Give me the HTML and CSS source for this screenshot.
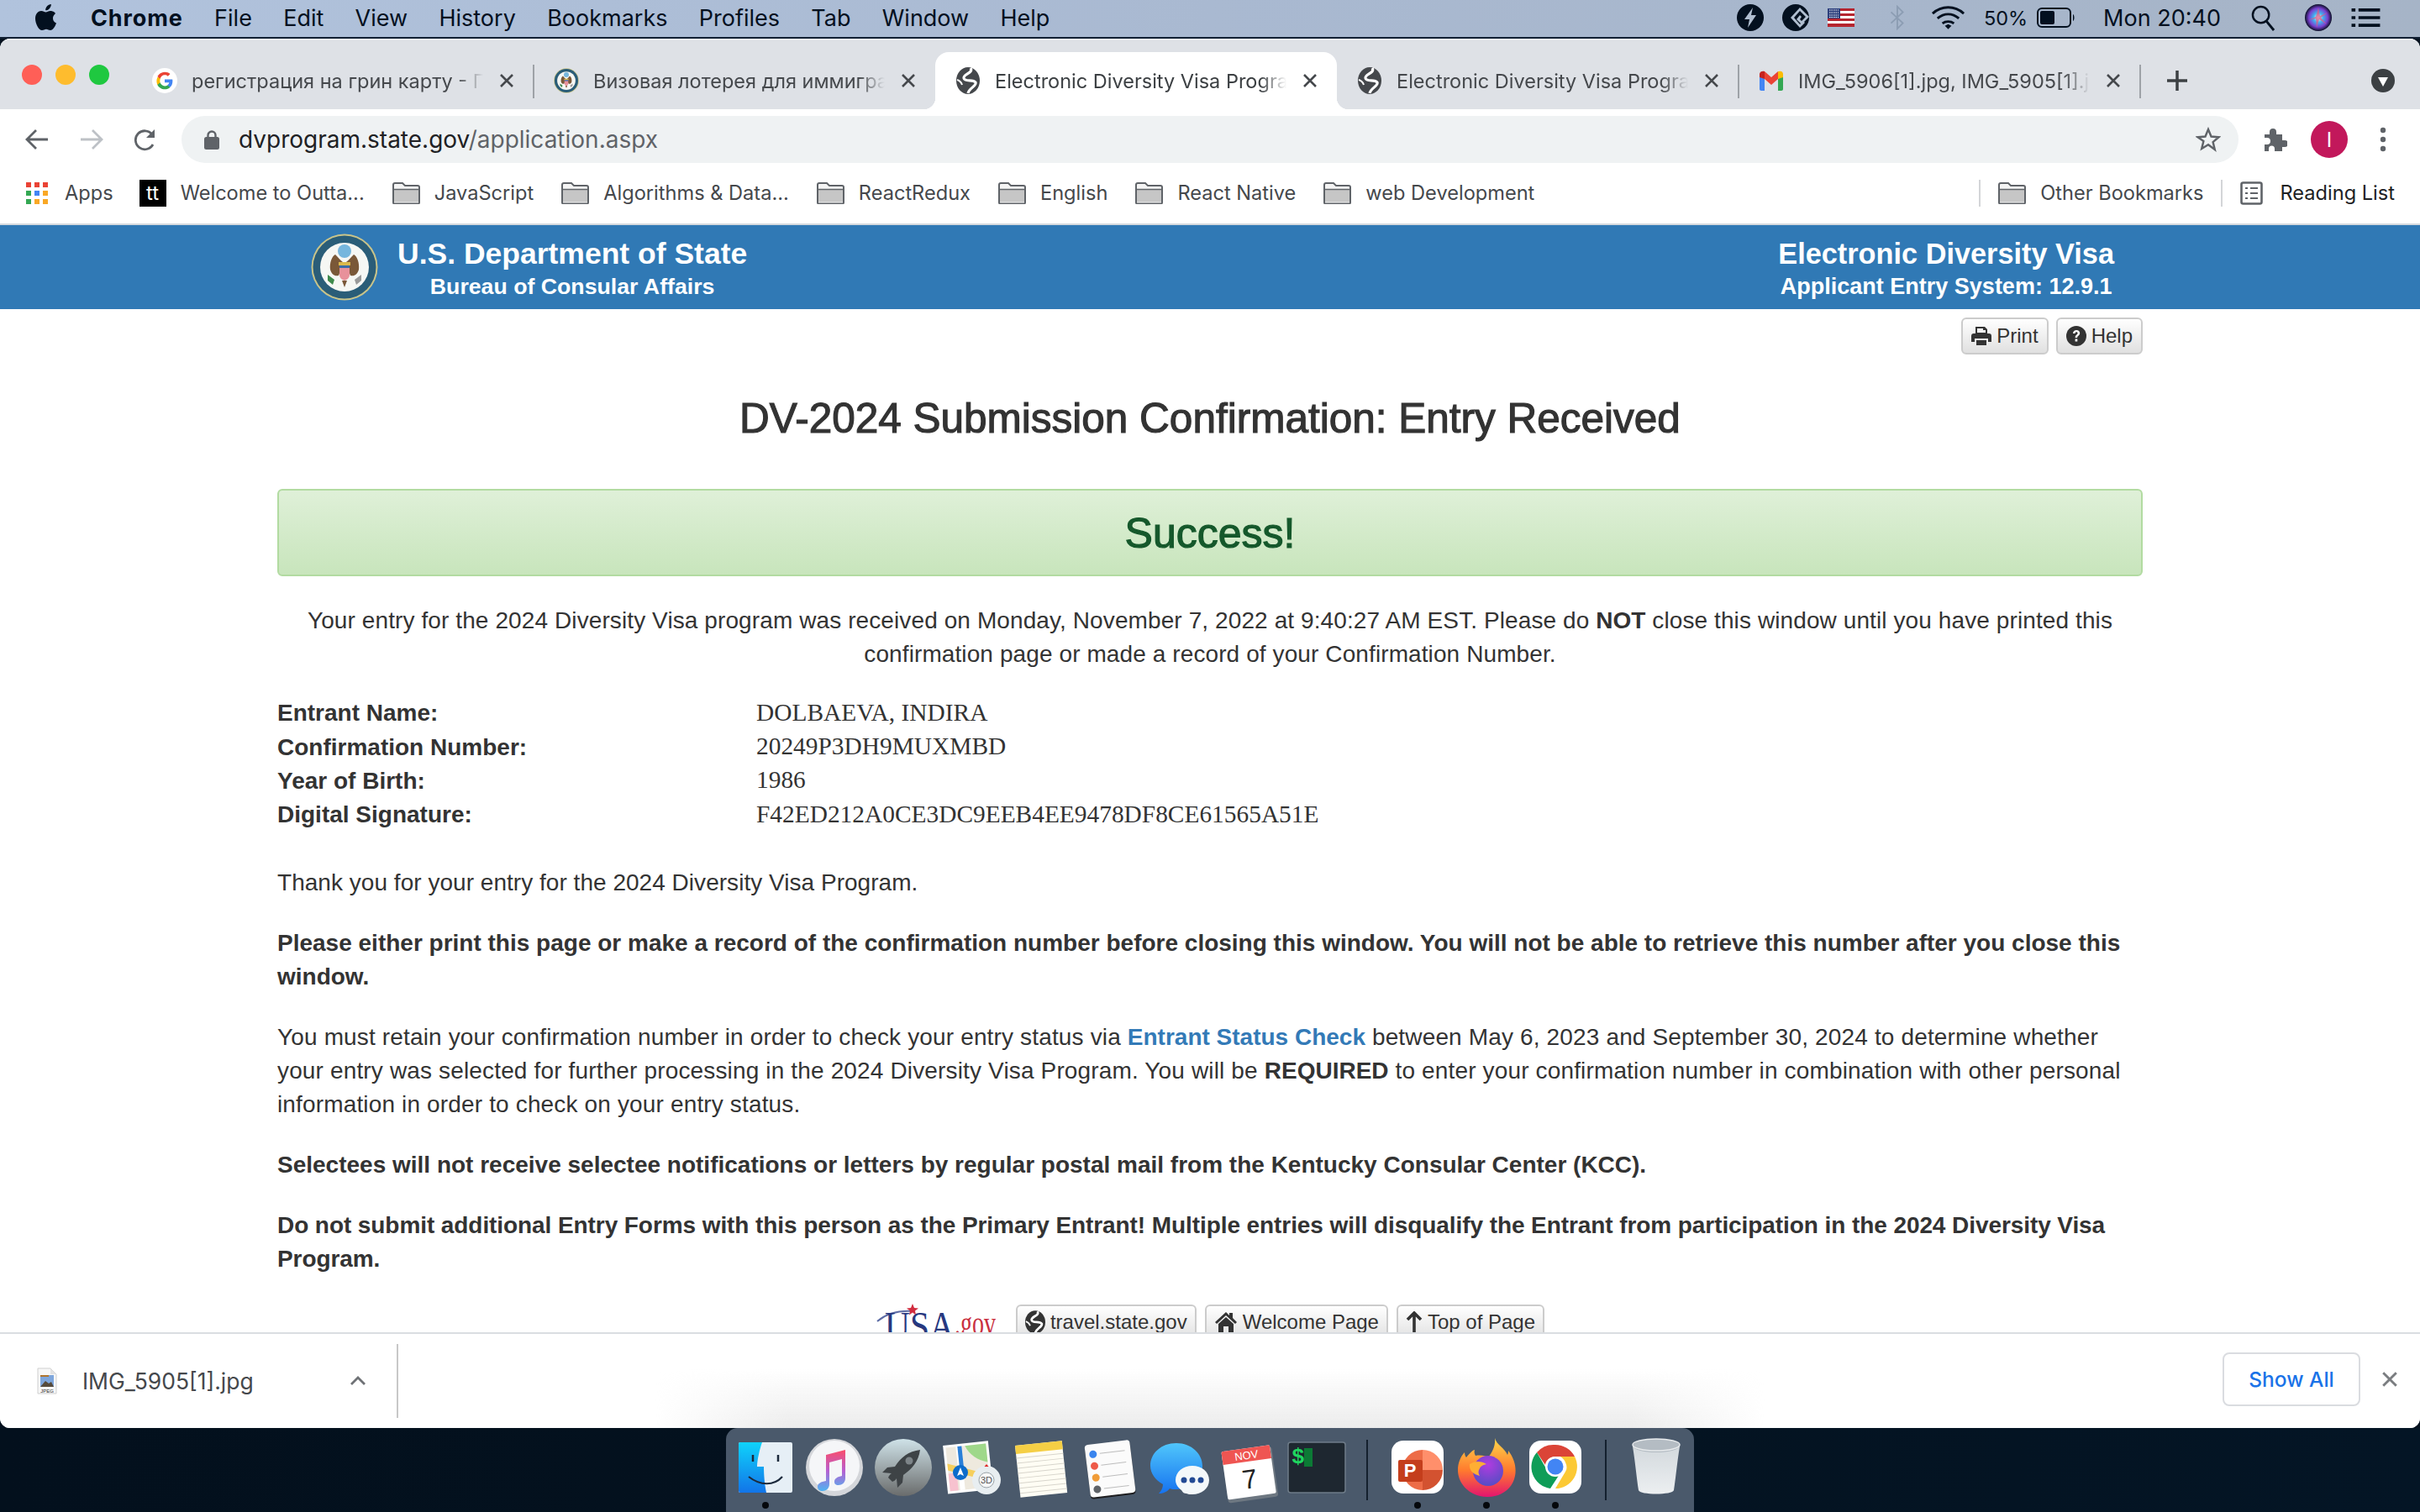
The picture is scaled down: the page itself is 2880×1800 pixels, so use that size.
FILE: index.html
```html
<!DOCTYPE html>
<html lang="en">
<head>
<meta charset="utf-8">
<title>Electronic Diversity Visa Program</title>
<link rel="stylesheet" href="styles.css">
</head>
<body>
<svg class="sprite" aria-hidden="true">
  <defs>
    <symbol id="folder" viewBox="0 0 33 26">
      <path d="M1 24V3a2 2 0 0 1 2-2h9l3 3h15a2 2 0 0 1 2 2v18a1.500 1.500 0 0 1-1.500 1.500H2.500A1.500 1.500 0 0 1 1 24z" fill="#f4f4f4" stroke="#5f6368" stroke-width="2"/>
      <path d="M2 9h29v14.500H2z" fill="#c6c6c6"/>
      <path d="M1 8.500h31" stroke="#5f6368" stroke-width="1.500"/>
    </symbol>
    <symbol id="globe" viewBox="0 0 28 32">
      <ellipse cx="14" cy="16" rx="14" ry="16" fill="currentColor"/>
      <path d="M17 1C21 7 8 8 9 13c1 5 11 1 14 5 2 4-8 7-9 13" fill="none" stroke="#fff" stroke-width="3.200"/>
      <path d="M1 15c3 1 5 3 6 6" fill="none" stroke="#fff" stroke-width="2"/>
    </symbol>
    <symbol id="close" viewBox="0 0 18 18">
      <path d="M2 2l14 14M16 2L2 16" stroke="currentColor" stroke-width="2.600" fill="none"/>
    </symbol>
    <symbol id="seal" viewBox="0 0 80 80">
      <circle cx="40" cy="40" r="39.500" fill="#c9c48a"/>
      <circle cx="40" cy="40" r="37.500" fill="#2a5d78"/>
      <circle cx="40" cy="40" r="29" fill="#f6f7f4"/>
      <circle cx="40" cy="21" r="8" fill="#76b6dd"/>
      <path d="M38 34c-3-2-5-5-9-9-4 2-7 10-6 18 2 6 5 8 10 7l3-8zM42 34c3-2 5-5 9-9 4 2 7 10 6 18-2 6-5 8-10 7l-3-8z" fill="#7a5838"/>
      <path d="M33 34h14v4H33z" fill="#d9b84c"/>
      <path d="M34 38h12v11c0 4-3 6-6 7-3-1-6-3-6-7z" fill="#e8919b"/>
      <path d="M34 38h12v3H34z" fill="#3a6ca8"/>
      <path d="M20 49l8 6-2 6-6-5z" fill="#3f8a4c"/>
      <path d="M60 49l-8 6 2 6 6-5z" fill="#9a9a9a"/>
      <path d="M37 56h6l-3 8z" fill="#7a5838"/>
    </symbol>
  </defs>
</svg>

<header class="menubar">
  <svg class="apple" viewBox="0 0 26 32"><path d="M21 17c0-4 3-5.500 3-6-2-3-5-3-6-3-2.500 0-4 1.500-5.500 1.500S9.500 8 7 8C4 8 0 11 0 17c0 6 4 14 8 14 2 0 3-1.300 5-1.300S16 31 18 31c3 0 6-5 7-8.500-2-1-4-2.500-4-5.500zM17 5c1.300-1.500 2-3.200 1.800-5-1.800.2-3.700 1.200-4.900 2.500-1 1.200-2 3-1.700 4.800 1.900.1 3.700-.9 4.800-2.300z" fill="#03101f"/></svg>
  <nav class="menu-items">
    <span class="menu-app">Chrome</span><span>File</span><span>Edit</span><span>View</span><span>History</span><span>Bookmarks</span><span>Profiles</span><span>Tab</span><span>Window</span><span>Help</span>
  </nav>
  <div class="status">
    <svg class="st-round" viewBox="0 0 32 32"><circle cx="16" cy="16" r="16" fill="#03101f"/><path d="M19 4L9 18h6l-2 10 10-15h-6z" fill="#b0bed0"/></svg>
    <svg class="st-round" viewBox="0 0 32 32"><circle cx="16" cy="16" r="16" fill="#03101f"/><path d="M21 4L10 16l11 12 6-6-2-2-4 4-7-8 7-8 7 7-5 5-2-2 2-3-2-2-4 5 6 6 9-9z" fill="#b0bed0"/></svg>
    <svg class="st-flag" viewBox="0 0 32 22"><rect width="32" height="22" fill="#fff"/><path d="M0 0h32v3H0zM0 6h32v3H0zM0 12h32v3H0zM0 18h32v4H0z" fill="#b5252f"/><rect width="15" height="12" fill="#2c3f7c"/><path d="M2 2h11M2 5h11M2 8h11M2 10.500h11" stroke="#fff" stroke-width="1" stroke-dasharray="1.500 1"/></svg>
    <svg class="st-bt" viewBox="0 0 22 32"><path d="M3 9l15 14-7 7V2l7 7L3 23" fill="none" stroke="#8c9db3" stroke-width="2"/></svg>
    <svg class="st-wifi" viewBox="0 0 42 30"><path d="M2 10c11-10 27-10 38 0M8 16c8-7 18-7 26 0M14 22c4-3 10-3 14 0" fill="none" stroke="#03101f" stroke-width="3"/><path d="M17 25l4-2 4 2-4 4z" fill="#03101f"/></svg>
    <span class="st-pct">50%</span>
    <svg class="st-batt" viewBox="0 0 46 24"><rect x="1" y="1" width="39" height="22" rx="5" fill="none" stroke="#03101f" stroke-width="2"/><rect x="4" y="4" width="17" height="16" rx="2" fill="#03101f"/><path d="M43 8c2 1 2 7 0 8z" fill="#03101f"/></svg>
    <span class="st-clock">Mon 20:40</span>
    <svg class="st-search" viewBox="0 0 30 32"><circle cx="12" cy="12" r="10" fill="none" stroke="#03101f" stroke-width="2.500"/><path d="M19 20l9 11" stroke="#03101f" stroke-width="3"/></svg>
    <svg class="st-siri" viewBox="0 0 32 32"><defs><radialGradient id="siri" cx="50%" cy="50%" r="50%"><stop offset="0" stop-color="#fff"/><stop offset=".35" stop-color="#3fb4ef"/><stop offset=".7" stop-color="#7a3fd1"/><stop offset="1" stop-color="#0a1026"/></radialGradient></defs><circle cx="16" cy="16" r="16" fill="url(#siri)"/><path d="M16 4l2 10 9-4-8 6 7 8-9-6-3 10-1-11-9 2 9-4z" fill="#e7557f" opacity=".7"/></svg>
    <svg class="st-list" viewBox="0 0 37 24"><path d="M0 2h5M9 2h28M0 12h5M9 12h28M0 22h5M9 22h28" stroke="#03101f" stroke-width="4"/></svg>
  </div>
</header>

<div class="window">
  <div class="tabstrip">
    <div class="lights"><i class="light red"></i><i class="light yellow"></i><i class="light green"></i></div>
    <div class="tab divided">
      <svg class="fav" viewBox="0 0 32 32"><circle cx="16" cy="16" r="16" fill="#fff"/><path d="M26 16.500c0-.8-.1-1.500-.2-2H16v4h5.700c-.3 1.300-1 2.400-2.100 3.100v2.700h3.300c2-1.800 3.100-4.500 3.100-7.800z" fill="#4285f4"/><path d="M16 27c2.800 0 5.100-.9 6.900-2.500l-3.300-2.700c-.9.600-2.200 1-3.600 1-2.700 0-5-1.900-5.800-4.300H6.800v2.800C8.500 24.700 12 27 16 27z" fill="#34a853"/><path d="M10.200 18.500c-.4-1.300-.4-2.700 0-4v-2.800H6.800c-1.400 2.800-1.400 6.800 0 9.600z" fill="#fbbc05"/><path d="M16 8.900c1.500 0 2.900.5 4 1.500l3-3C21.100 5.700 18.700 5 16 5c-4 0-7.500 2.300-9.200 5.700l3.400 2.800c.8-2.500 3.100-4.600 5.800-4.600z" fill="#ea4335"/></svg>
      <span class="tab-title">регистрация на грин карту - Поиск в Google</span>
      <svg class="tab-x"><use href="#close"/></svg>
    </div>
    <div class="tab">
      <svg class="fav"><use href="#seal"/></svg>
      <span class="tab-title">Визовая лотерея для иммиграции</span>
      <svg class="tab-x"><use href="#close"/></svg>
    </div>
    <div class="tab active">
      <svg class="fav fav-globe"><use href="#globe"/></svg>
      <span class="tab-title">Electronic Diversity Visa Program</span>
      <svg class="tab-x"><use href="#close"/></svg>
    </div>
    <div class="tab divided">
      <svg class="fav fav-globe"><use href="#globe"/></svg>
      <span class="tab-title">Electronic Diversity Visa Program</span>
      <svg class="tab-x"><use href="#close"/></svg>
    </div>
    <div class="tab divided">
      <svg class="fav" viewBox="0 0 30 32"><path d="M1 8v18c0 1 .8 2 2 2h4V14z" fill="#4285f4"/><path d="M29 8v18c0 1-.8 2-2 2h-4V14z" fill="#34a853"/><path d="M23 5v9l6-2V8c0-3-3-4-5-3z" fill="#fbbc04"/><path d="M7 14V5L15 12l8-7v9l-8 7z" fill="#ea4335"/><path d="M1 8v4l6 2V5C5 4 1 5 1 8z" fill="#c5221f"/></svg>
      <span class="tab-title">IMG_5906[1].jpg, IMG_5905[1].jpg</span>
      <svg class="tab-x"><use href="#close"/></svg>
    </div>
    <svg class="newtab" viewBox="0 0 24 24"><path d="M12 0v24M0 12h24" stroke="#3c4043" stroke-width="3.500"/></svg>
    <svg class="tabmenu" viewBox="0 0 28 28"><circle cx="14" cy="14" r="14" fill="#3c4043"/><path d="M8 10h12l-6 11z" fill="#fff"/></svg>
  </div>

  <div class="toolbar">
    <svg class="tool-icon" viewBox="0 0 28 28"><path d="M27 14H3M13 3L2 14l11 11" fill="none" stroke="#5f6368" stroke-width="2.800"/></svg>
    <svg class="tool-icon forward" viewBox="0 0 28 28"><path d="M1 14h24M15 3l11 11-11 11" fill="none" stroke="#bdc1c6" stroke-width="2.800"/></svg>
    <svg class="tool-icon reload" viewBox="0 0 28 28"><path d="M23 20a11 11 0 1 1-1-12" fill="none" stroke="#5f6368" stroke-width="2.800"/><path d="M25 2v10H15z" fill="#5f6368"/></svg>
    <div class="omnibox">
      <svg class="lock" viewBox="0 0 18 24"><path d="M4.500 11V7a4.500 4.500 0 0 1 9 0v4" fill="none" stroke="#5f6368" stroke-width="2.400"/><rect y="9" width="18" height="15" rx="2.500" fill="#5f6368"/></svg>
      <span class="url"><span class="url-host">dvprogram.state.gov</span>/application.aspx</span>
      <svg class="star" viewBox="0 0 30 30"><path d="M15 3l3.500 8.500 9 .7-6.900 5.900 2.200 8.900L15 21.300 7.200 26l2.200-8.900L2.500 12.200l9-.7z" fill="none" stroke="#5f6368" stroke-width="2.400"/></svg>
    </div>
    <svg class="puzzle" viewBox="0 0 30 30"><path d="M3 9h6V6a4 4 0 0 1 8 0v3h7v7h3a4 4 0 0 1 0 8h-3v5H15v-3a3.500 3.500 0 0 0-7 0v3H3v-8h3a4 4 0 0 0 0-8H3z" fill="#5f6368"/></svg>
    <div class="avatar">I</div>
    <svg class="dots" viewBox="0 0 8 30"><circle cx="4" cy="4" r="3.200" fill="#5f6368"/><circle cx="4" cy="15" r="3.200" fill="#5f6368"/><circle cx="4" cy="26" r="3.200" fill="#5f6368"/></svg>
  </div>

  <div class="bookmarks">
    <div class="bm bm-apps">
      <svg class="bm-grid" viewBox="0 0 26 26"><path d="M0 0h6v6H0z" fill="#ea4335"/><path d="M10 0h6v6h-6z" fill="#ea4335"/><path d="M20 0h6v6h-6z" fill="#ea4335"/><path d="M0 10h6v6H0z" fill="#34a853"/><path d="M10 10h6v6h-6z" fill="#4285f4"/><path d="M20 10h6v6h-6z" fill="#f9a825"/><path d="M0 20h6v6H0z" fill="#34a853"/><path d="M10 20h6v6h-6z" fill="#f9a825"/><path d="M20 20h6v6h-6z" fill="#f9a825"/></svg>
      <span>Apps</span>
    </div>
    <div class="bm"><span class="tt">tt</span><span>Welcome to Outta...</span></div>
    <div class="bm"><svg class="folder"><use href="#folder"/></svg><span>JavaScript</span></div>
    <div class="bm"><svg class="folder"><use href="#folder"/></svg><span>Algorithms &amp; Data...</span></div>
    <div class="bm"><svg class="folder"><use href="#folder"/></svg><span>ReactRedux</span></div>
    <div class="bm"><svg class="folder"><use href="#folder"/></svg><span>English</span></div>
    <div class="bm"><svg class="folder"><use href="#folder"/></svg><span>React Native</span></div>
    <div class="bm"><svg class="folder"><use href="#folder"/></svg><span>web Development</span></div>
    <div class="bm-right">
      <i class="bm-sep"></i>
      <div class="bm"><svg class="folder"><use href="#folder"/></svg><span>Other Bookmarks</span></div>
      <i class="bm-sep"></i>
      <div class="bm bm-read">
        <svg class="read-icon" viewBox="0 0 27 28"><rect x="1.500" y="1.500" width="24" height="25" rx="2" fill="none" stroke="#5f6368" stroke-width="2.600"/><path d="M6 8h3M12 8h9M6 14h3M12 14h9M6 20h3M12 20h9" stroke="#5f6368" stroke-width="2.200"/></svg>
        <span>Reading List</span>
      </div>
    </div>
  </div>

  <main class="page">
    <div class="banner">
      <div class="banner-left">
        <svg class="banner-seal"><use href="#seal"/></svg>
        <div class="banner-text">
          <div class="banner-h1">U.S. Department of State</div>
          <div class="banner-h2">Bureau of Consular Affairs</div>
        </div>
      </div>
      <div class="banner-text banner-right">
        <div class="banner-h1">Electronic Diversity Visa</div>
        <div class="banner-h2">Applicant Entry System: 12.9.1</div>
      </div>
    </div>
    <div class="content">
      <div class="topbtns">
        <span class="btn"><svg class="fa fa-print" viewBox="0 0 24 24"><path d="M5 9V1h11l3 3v5zM7 3v5h10V5h-3V3z" fill="#333" fill-rule="evenodd"/><path d="M3 9h18a3 3 0 0 1 3 3v7h-4v-4H4v4H0v-7a3 3 0 0 1 3-3z" fill="#333"/><path d="M6 17h12v6H6z" fill="#333"/></svg>Print</span>
        <span class="btn"><svg class="fa" viewBox="0 0 24 24"><circle cx="12" cy="12" r="12" fill="#333"/><path d="M8 9c0-2.500 2-4 4.200-4 2.300 0 4 1.500 4 3.600 0 3-3 3-3 5.400h-2.600c0-3.500 3-3.500 3-5.300 0-.8-.6-1.400-1.500-1.400-1 0-1.500.6-1.600 1.700zM10.600 15.500h2.700V18.500h-2.700z" fill="#fff"/></svg>Help</span>
      </div>
      <h1 class="title">DV-2024 Submission Confirmation: Entry Received</h1>
      <div class="success">Success!</div>
      <p class="lead">Your entry for the 2024 Diversity Visa program was received on Monday, November 7, 2022 at 9:40:27 AM EST. Please do <b>NOT</b> close this window until you have printed this confirmation page or made a record of your Confirmation Number.</p>
      <dl class="facts">
        <dt>Entrant Name:</dt><dd>DOLBAEVA, INDIRA</dd>
        <dt>Confirmation Number:</dt><dd>20249P3DH9MUXMBD</dd>
        <dt>Year of Birth:</dt><dd>1986</dd>
        <dt>Digital Signature:</dt><dd>F42ED212A0CE3DC9EEB4EE9478DF8CE61565A51E</dd>
      </dl>
      <p class="para para-plain">Thank you for your entry for the 2024 Diversity Visa Program.</p>
      <p class="para"><b>Please either print this page or make a record of the confirmation number before closing this window. You will not be able to retrieve this number after you close this window.</b></p>
      <p class="para">You must retain your confirmation number in order to check your entry status via <a class="link" href="#">Entrant Status Check</a> between May 6, 2023 and September 30, 2024 to determine whether your entry was selected for further processing in the 2024 Diversity Visa Program. You will be <b>REQUIRED</b> to enter your confirmation number in combination with other personal information in order to check on your entry status.</p>
      <p class="para"><b>Selectees will not receive selectee notifications or letters by regular postal mail from the Kentucky Consular Center (KCC).</b></p>
      <p class="para"><b class="tight">Do not submit additional Entry Forms with this person as the Primary Entrant! Multiple entries will disqualify the Entrant from participation in the 2024 Diversity Visa Program.</b></p>
      <div class="footer-links">
        <svg class="usagov" viewBox="0 0 143 60">
          <path d="M2 22C14 12 28 9 44 10" fill="none" stroke="#5d6ca5" stroke-width="2"/>
          <path d="M44 1l2 5 5 .5-4 3 1 5-4-3-4 3 1-5-4-3 5-.5z" fill="#d12d3f"/>
          <text class="usa-t" x="11" y="44" textLength="83" lengthAdjust="spacingAndGlyphs">USA</text>
          <text class="usa-g" x="94" y="38" textLength="49" lengthAdjust="spacingAndGlyphs">.gov</text>
        </svg>
        <span class="btn btn-foot"><svg class="fa fa-globe"><use href="#globe"/></svg>travel.state.gov</span>
        <span class="btn btn-foot"><svg class="fa fa-home" viewBox="0 0 28 26"><path d="M14 1L1 13l2 2L14 5l11 10 2-2-5-5V2h-4v3z" fill="#333"/><path d="M5 15L14 7l9 8v10h-6v-7h-6v7H5z" fill="#333"/></svg>Welcome Page</span>
        <span class="btn btn-foot"><svg class="fa fa-up" viewBox="0 0 20 26"><path d="M10 2v23M2 10l8-8 8 8" fill="none" stroke="#333" stroke-width="3.600"/></svg>Top of Page</span>
      </div>
    </div>
  </main>

  <div class="downloads">
    <div class="dl-glow"></div>
    <div class="dl-item">
      <svg class="dl-file" viewBox="0 0 24 32"><path d="M1 1h15l7 7v23H1z" fill="#f7f7f7" stroke="#cfcfcf"/><path d="M16 1l7 7h-7z" fill="#e2e2e2"/><rect x="4" y="9" width="16" height="14" fill="#7ea6dc"/><path d="M4 23l6-7 4 3 3-2 3 6z" fill="#574b3c"/><rect x="4" y="9" width="10" height="2" fill="#b0762f"/><text class="dl-jpeg" x="12" y="29.500" text-anchor="middle">JPEG</text></svg>
      <span class="dl-name">IMG_5905[1].jpg</span>
      <svg class="dl-chev" viewBox="0 0 20 12"><path d="M2 10l8-8 8 8" fill="none" stroke="#6f7276" stroke-width="2.800"/></svg>
    </div>
    <button class="showall">Show All</button>
    <svg class="dl-close"><use href="#close"/></svg>
  </div>
</div>

<footer class="desktop">
  <div class="dock">
    <div class="dock-cell running"><svg class="dock-icon" viewBox="0 0 72 72"><defs><linearGradient id="fd" x1="0" y1="0" x2="0" y2="1"><stop offset="0" stop-color="#0fd3fb"/><stop offset="1" stop-color="#1274e8"/></linearGradient></defs><rect x="4" y="5" width="64" height="60" rx="2" fill="#e6eff6"/><path d="M6 5h26c-3 8-6 22-6 29h8c0 10 1 22 3 31H6a2 2 0 0 1-2-2V7a2 2 0 0 1 2-2z" fill="url(#fd)"/><path d="M21 20v8M51 20v8" stroke="#1c2a3c" stroke-width="2.500"/><path d="M16 46c14 11 30 11 40 0" fill="none" stroke="#1c2a3c" stroke-width="2.200"/></svg></div>
    <div class="dock-cell"><svg class="dock-icon" viewBox="0 0 72 72"><defs><linearGradient id="mn" x1="0" y1="0" x2="0" y2="1"><stop offset="0" stop-color="#fa4d6a"/><stop offset=".5" stop-color="#b85fd0"/><stop offset="1" stop-color="#4fb4f2"/></linearGradient></defs><ellipse cx="36" cy="35" rx="34" ry="34" fill="#d4d6da"/><circle cx="36" cy="33" r="30" fill="#f5f6f8"/><path d="M26 20l23-6v34c0 5-4 8-8 8s-5-2-5-4c0-4 4-6 9-7V25l-15 4v26c0 5-4 8-8 8s-6-2-6-5c0-4 4-6 10-7z" fill="url(#mn)"/></svg></div>
    <div class="dock-cell"><svg class="dock-icon" viewBox="0 0 72 72"><defs><linearGradient id="rk" x1="0" y1="0" x2="0" y2="1"><stop offset="0" stop-color="#cfe2e8"/><stop offset="1" stop-color="#6a6c6c"/></linearGradient></defs><circle cx="36" cy="35" r="34" fill="url(#rk)"/><path d="M56 14c-14 2-22 8-30 20l-9 1-6 6 11 1c-2 1-3 3-4 5l5 5c2-1 4-2 5-4l1 11 6-6 1-9c11-8 18-16 20-30z" fill="#3e4346"/><circle cx="43" cy="27" r="4.500" fill="#7d8488"/></svg></div>
    <div class="dock-cell"><svg class="dock-icon" viewBox="0 0 72 72"><g transform="rotate(-6 30 35)"><rect x="4" y="6" width="54" height="58" fill="#fff"/><rect x="7" y="9" width="48" height="52" fill="#eee9de"/><path d="M30 9h25v22C44 28 34 20 30 9z" fill="#9fd88a"/><path d="M7 28l48 18v8L7 36z" fill="#f6cf5d"/><path d="M7 40h10v21H7z" fill="#f7c2cf"/><path d="M19 9h6v52h-6z" fill="#fff"/><path d="M21 9h5v30h-5z" fill="#2a7fd8"/></g><circle cx="22" cy="41" r="9" fill="#0d6ccb"/><path d="M22 35l4 10-4-2-4 2z" fill="#fff"/><circle cx="53" cy="50" r="17" fill="#e8eef1"/><circle cx="53" cy="50" r="9" fill="#f7f8f8" stroke="#9aa3a8"/><path d="M53 31l2.500 3h-5z" fill="#e02828"/><text class="d3" x="53" y="54" text-anchor="middle">3D</text></svg></div>
    <div class="dock-cell"><svg class="dock-icon" viewBox="0 0 72 72"><g transform="rotate(-6 36 36)"><rect x="8" y="6" width="56" height="62" fill="#fffdf4"/><rect x="8" y="6" width="56" height="10" fill="#f5cf45"/><path d="M8 21h56M8 27h56M8 33h56M8 39h56M8 45h56M8 51h56M8 57h56M8 63h56" stroke="#d7d5cc" stroke-width="1"/></g></svg></div>
    <div class="dock-cell"><svg class="dock-icon" viewBox="0 0 72 72"><g transform="rotate(-7 36 36)"><rect x="9" y="6" width="54" height="64" rx="4" fill="#1d1d1f"/><rect x="9" y="5" width="54" height="63" rx="4" fill="#fbfbfb"/><circle cx="18" cy="17" r="4.500" fill="#3a85ee"/><circle cx="18" cy="31" r="4.500" fill="#ee5a49"/><circle cx="18" cy="45" r="4.500" fill="#f09c38"/><circle cx="18" cy="59" r="4.500" fill="#5f6368"/><path d="M26 17h30M26 31h30M26 45h30M26 59h30" stroke="#bdbdbd"/></g></svg></div>
    <div class="dock-cell"><svg class="dock-icon" viewBox="0 0 72 72"><defs><linearGradient id="ms" x1="0" y1="0" x2="0" y2="1"><stop offset="0" stop-color="#50c6fb"/><stop offset="1" stop-color="#1673f0"/></linearGradient></defs><path d="M33 6c18 0 31 13 31 27 0 16-13 28-31 28-3 0-6 0-8-1-3 4-8 6-13 6 3-3 5-7 5-11C8 50 2 42 2 33 2 18 15 6 33 6z" fill="url(#ms)"/><path d="M52 33c11 0 20 7 20 17s-9 17-20 17c-3 0-5 0-7-1-3 0-4-1-6-4-4-3-7-7-7-12 0-10 9-17 20-17z" fill="#f4f8fa"/><circle cx="42" cy="50" r="3.500" fill="#234a94"/><circle cx="52" cy="50" r="3.500" fill="#234a94"/><circle cx="62" cy="50" r="3.500" fill="#234a94"/></svg></div>
    <div class="dock-cell"><svg class="dock-icon" viewBox="0 0 72 72"><g transform="rotate(-8 36 40)"><rect x="8" y="14" width="60" height="60" rx="3" fill="#6d7781"/><rect x="8" y="12" width="58" height="58" rx="2" fill="#fff"/><path d="M8 14a2 2 0 0 1 2-2h54a2 2 0 0 1 2 2v14H8z" fill="#ef5552"/><text class="cal-m" x="37" y="25" text-anchor="middle">NOV</text><text class="cal-d" x="37" y="60" text-anchor="middle">7</text></g></svg></div>
    <div class="dock-cell"><svg class="dock-icon" viewBox="0 0 72 72"><rect x="2" y="5" width="68" height="60" rx="3" fill="#1e2730" stroke="#6f7c89" stroke-width="1.500"/><text class="term" x="6" y="30">$</text><rect x="21" y="12" width="10" height="22" fill="#0c7a35"/></svg></div>
    <i class="dock-sep"></i>
    <div class="dock-cell running"><svg class="dock-icon" viewBox="0 0 72 72"><rect x="5" y="3" width="62" height="63" rx="14" fill="#fff"/><path d="M42 14a24 24 0 0 1 24 24H42z" fill="#ff8f6b"/><path d="M42 38h24a24 24 0 0 1-24 24z" fill="#d35230"/><path d="M42 14v48a24 24 0 0 1 0-48z" fill="#ed6c47"/><rect x="13" y="26" width="29" height="26" rx="2" fill="#c43e1c"/><text class="ppt" x="27" y="46" text-anchor="middle">P</text></svg></div>
    <div class="dock-cell running"><svg class="dock-icon" viewBox="0 0 72 72"><defs><linearGradient id="ff" x1="0" y1="0" x2="0" y2="1"><stop offset="0" stop-color="#ffd84a"/><stop offset=".55" stop-color="#ff7a2e"/><stop offset="1" stop-color="#e3146f"/></linearGradient><radialGradient id="ffc" cx=".5" cy=".3" r=".8"><stop offset="0" stop-color="#b13be0"/><stop offset="1" stop-color="#4a4fc0"/></radialGradient></defs><path d="M46 0c2 8 12 12 15 20 1-2 1-4 1-5 7 9 10 20 8 30-3 16-17 25-33 25C18 70 2 56 2 38c0-8 3-16 8-21 0 3 1 5 2 6 3-4 8-9 10-9-1 3 0 5 1 7 6-1 12 0 15 2 5-6 9-14 8-23z" fill="url(#ff)"/><circle cx="38" cy="39" r="18" fill="url(#ffc)"/><path d="M16 31c6-4 14-4 20 0-5 1-7 3-8 5-2 3-2 6 0 9-8-2-13-7-12-14z" fill="#ffae33"/></svg></div>
    <div class="dock-cell running"><svg class="dock-icon" viewBox="0 0 72 72"><rect x="5" y="3" width="62" height="63" rx="14" fill="#fff"/><path d="M36 8a26 26 0 0 1 23 14H36c-6 0-11 4-12 10L14 17A26 26 0 0 1 36 8z" fill="#db4437"/><path d="M59 22a26 26 0 0 1-23 38l12-20c2-3 2-7 0-11-1-3-3-5-6-7z" fill="#fcc934"/><path d="M14 17l12 21c2 4 6 6 10 6 2 0 4 0 5-1L30 60A26 26 0 0 1 14 17z" fill="#0f9d58"/><circle cx="36" cy="34" r="12" fill="#fff"/><circle cx="36" cy="34" r="9.500" fill="#4285f4"/></svg></div>
    <i class="dock-sep"></i>
    <div class="dock-cell"><svg class="dock-icon" viewBox="0 0 72 72"><defs><linearGradient id="tr" x1="0" y1="0" x2="0" y2="1"><stop offset="0" stop-color="#d3d9dd"/><stop offset="1" stop-color="#eceff1"/></linearGradient></defs><path d="M8 10c3 18 5 40 7 52 1 6 41 6 42 0 2-12 4-34 7-52z" fill="url(#tr)"/><ellipse cx="36" cy="9" rx="28" ry="8" fill="#b4bcc3"/><ellipse cx="36" cy="8" rx="28" ry="7" fill="none" stroke="#e8ebed" stroke-width="1.500"/></svg></div>
  </div>
</footer>
</body>
</html>
```
FILE: styles.css
```css
* { box-sizing: border-box; }
html, body { margin: 0; padding: 0; }
body {
  width: 2880px;
  height: 1800px;
  overflow: hidden;
  background: #04111f;
  font-family: "Liberation Sans", Arial, sans-serif;
  color: #333;
  display: flex;
  flex-direction: column;
}
.sprite { position: absolute; width: 0; height: 0; }

/* menu bar */
.menubar {
  height: 46px;
  flex: none;
  display: flex;
  align-items: center;
  padding: 0 46px 2px 42px;
  background: linear-gradient(90deg, #b1c3dd, #a9b9d1 50%, #a6b4c7);
  border-bottom: 2px solid #101f33;
  font-family: Inter, "Liberation Sans", sans-serif;
  font-size: 27px;
  color: #03101f;
}
.apple { width: 26px; height: 32px; margin-right: 40px; }
.menu-items { display: flex; gap: 37.300px; }
.menu-app { font-weight: 700; letter-spacing: .9px; }
.status { margin-left: auto; display: flex; align-items: center; gap: 22px; }
.st-round { width: 32px; height: 32px; }
.st-flag { width: 32px; height: 22px; }
.st-bt { width: 22px; height: 30px; margin-left: 18px; }
.st-wifi { width: 41px; height: 30px; margin-left: 7px; }
.st-pct { font-size: 23.500px; }
.st-batt { width: 46px; height: 24px; margin-left: -11px; }
.st-clock { margin-left: 11px; }
.st-search { width: 29px; height: 31px; margin-left: 14px; }
.st-siri { width: 32px; height: 32px; margin-left: 13px; }
.st-list { width: 37px; height: 22px; }

/* window */
.window {
  height: 1654px;
  flex: none;
  display: flex;
  flex-direction: column;
  border-radius: 12px;
  overflow: hidden;
  background: #fff;
  font-family: Inter, "Liberation Sans", sans-serif;
}
.tabstrip {
  height: 84px;
  flex: none;
  display: flex;
  align-items: flex-end;
  padding-left: 26px;
  background: #dee1e6;
  border-top: 2px solid #e9ebee;
}
.lights { display: flex; gap: 16px; align-self: flex-start; margin: 29px 27px 0 0; }
.light { width: 24px; height: 24px; border-radius: 50%; display: block; }
.red { background: #ff5f57; }
.yellow { background: #febc2e; }
.green { background: #1fc840; }
.tab {
  position: relative;
  width: 478px;
  height: 68px;
  flex: none;
  display: flex;
  align-items: center;
  padding: 0 23px 0 24px;
  font-size: 23.500px;
  color: #45484c;
}
.tab.divided::after {
  content: "";
  position: absolute;
  right: -1px;
  top: 15px;
  width: 2px;
  height: 40px;
  background: #9ea2a7;
}
.tab.active { background: #fff; border-radius: 16px 16px 0 0; color: #3c4043; }
.tab.active::before, .tab.active::after {
  content: "";
  position: absolute;
  bottom: 0;
  width: 14px;
  height: 14px;
}
.tab.active::before { left: -14px; background: radial-gradient(circle at 0 0, transparent 14px, #fff 14.500px); }
.tab.active::after { right: -14px; background: radial-gradient(circle at 100% 0, transparent 14px, #fff 14.500px); }
.fav { width: 30px; height: 32px; flex: none; margin-right: 17px; }
.fav-globe { color: #45484c; }
.tab-title {
  flex: 1;
  min-width: 0;
  white-space: nowrap;
  overflow: hidden;
  -webkit-mask-image: linear-gradient(90deg, #000 91%, transparent 100%);
  mask-image: linear-gradient(90deg, #000 91%, transparent 100%);
}
.tab-x { width: 18px; height: 18px; flex: none; margin-left: 19px; color: #45484c; }
.newtab { width: 24px; height: 24px; margin: 0 0 22px 32px; }
.tabmenu { width: 28px; height: 28px; margin: 0 30px 20px auto; }

/* toolbar */
.toolbar {
  height: 67px;
  flex: none;
  display: flex;
  align-items: flex-start;
  padding: 8px 30px 0 30px;
  background: #fff;
}
.tool-icon { width: 28px; height: 28px; flex: none; margin-top: 14px; }
.forward { margin-left: 37px; }
.reload { margin-left: 36px; margin-right: 29px; }
.omnibox {
  flex: 1;
  height: 56px;
  display: flex;
  align-items: center;
  padding: 0 21px 0 27px;
  border-radius: 28px;
  background: #eff2f3;
  font-size: 28px;
  color: #5f6368;
}
.lock { width: 18px; height: 24px; margin-right: 23px; }
.url-host { color: #202124; }
.star { width: 30px; height: 30px; margin-left: auto; }
.puzzle { width: 30px; height: 30px; margin: 13px 0 0 28px; }
.avatar {
  width: 44px;
  height: 44px;
  margin: 6px 0 0 28px;
  border-radius: 50%;
  background: #c2185b;
  color: #fff;
  font-size: 24px;
  display: flex;
  align-items: center;
  justify-content: center;
}
.dots { width: 8px; height: 30px; margin: 13px 10px 0 38px; }

/* bookmarks */
.bookmarks {
  height: 71px;
  flex: none;
  display: flex;
  align-items: center;
  gap: 33px;
  padding: 0 30px 4px 31px;
  background: #fff;
  border-bottom: 2px solid #d5d9de;
  font-size: 23.600px;
  color: #45484c;
}
.bm { display: flex; align-items: center; gap: 17px; white-space: nowrap; }
.bm-grid { width: 26px; height: 26px; }
.bm-apps { gap: 20px; margin-right: -2px; }
.tt {
  width: 32px;
  height: 32px;
  background: #000;
  color: #fff;
  font-size: 24px;
  line-height: 32px;
  text-align: center;
}
.folder { width: 33px; height: 26px; }
.bm-right { margin-left: auto; display: flex; align-items: center; gap: 21px; }
.bm-sep { width: 2px; height: 32px; background: #d3d5d8; display: block; }
.read-icon { width: 27px; height: 28px; }
.bm-read { color: #202124; gap: 20px; }

/* page */
.page {
  height: 1318px;
  flex: none;
  overflow: hidden;
  background: #fff;
  font-family: "Liberation Sans", Arial, sans-serif;
  font-size: 28px;
  line-height: 40px;
  color: #333;
}
.banner {
  height: 100px;
  display: flex;
  justify-content: space-between;
  align-items: center;
  padding: 0 364px 0 370px;
  background: #3079b5;
  color: #fff;
}
.banner-left { display: flex; align-items: center; gap: 23px; }
.banner-seal { width: 80px; height: 80px; }
.banner-text { padding-top: 3px; text-align: center; font-weight: 700; }
.banner-h1 { font-size: 35.500px; line-height: 42px; }
.banner-h2 { font-size: 26.700px; line-height: 36px; }
.banner-right .banner-h1 { font-size: 34.300px; }
.banner-right .banner-h2 { font-size: 27px; }
.content { padding: 10px 330px 0; }
.topbtns { display: flex; justify-content: flex-end; gap: 9px; }
.btn {
  height: 44px;
  display: inline-flex;
  align-items: center;
  gap: 6px;
  padding: 0 10px;
  border: 2px solid #ccc;
  border-radius: 6px;
  background: linear-gradient(#fff, #e0e0e0);
  font-size: 24px;
  line-height: 1;
  white-space: nowrap;
  color: #333;
}
.fa { width: 24px; height: 24px; flex: none; }
.title {
  margin: 43px 0 51px;
  font-size: 49.500px;
  line-height: 66px;
  font-weight: 400;
  -webkit-text-stroke: 1.200px #333;
  text-align: center;
  color: #333;
}
.success {
  height: 104px;
  display: flex;
  align-items: center;
  justify-content: center;
  padding-top: 2px;
  border: 2px solid #b2dba1;
  border-radius: 6px;
  background: linear-gradient(#dff0d8, #c8e5bc);
  font-size: 50px;
  font-weight: 400;
  -webkit-text-stroke: 1.200px #15582b;
  color: #15582b;
}
.lead { margin: 33px 0 30px; text-align: center; letter-spacing: .1px; }
.facts {
  margin: 0 0 40px;
  display: grid;
  grid-template-columns: 570px 1fr;
  grid-auto-rows: 40.400px;
  align-items: center;
}
.facts dt { font-weight: 700; }
.facts dd { margin: 0; padding-bottom: 3px; font-family: "Liberation Serif", "Times New Roman", serif; font-size: 29.400px; }
.para { margin: 0 0 32px; letter-spacing: .15px; }
.para-plain { letter-spacing: .03px; }
.para b, .lead b, .link { letter-spacing: 0; }
.para b.tight { letter-spacing: -.08px; }
.link { color: #337ab7; font-weight: 700; text-decoration: none; }
.footer-links { display: flex; justify-content: center; align-items: flex-start; gap: 10px; margin-top: 34px; }
.usagov { width: 143px; height: 60px; margin-right: 14px; margin-top: -2px; }
.usa-t { font-family: "Liberation Serif", serif; font-size: 48px; fill: #27387f; }
.usa-g { font-family: "Liberation Serif", serif; font-size: 40px; fill: #c9303f; }
.btn-foot { padding: 0 9px 2px; }
.fa-globe { color: #333; width: 24px; height: 28px; }
.fa-home { width: 28px; height: 26px; }
.fa-up { width: 20px; height: 26px; }

/* download shelf */
.downloads {
  position: relative;
  height: 114px;
  flex: none;
  display: flex;
  align-items: center;
  padding: 0 26px 0 44px;
  border-top: 2px solid #dadde1;
  background: #fff;
}
.dl-glow {
  position: absolute;
  left: 780px;
  right: 780px;
  bottom: 0;
  height: 70px;
  background: linear-gradient(rgba(238,238,238,0), #ececec);
  -webkit-mask-image: linear-gradient(90deg, transparent, #000 12%, #000 88%, transparent);
  mask-image: linear-gradient(90deg, transparent, #000 12%, #000 88%, transparent);
}
.dl-item {
  position: relative;
  width: 430px;
  height: 88px;
  display: flex;
  align-items: center;
  border-right: 2px solid #c8c8c8;
  font-size: 26.500px;
  color: #45484c;
}
.dl-file { width: 24px; height: 32px; flex: none; margin-right: 30px; }
.dl-jpeg { font-family: "Liberation Sans", sans-serif; font-size: 6px; fill: #333; }
.dl-chev { width: 20px; height: 12px; margin-left: auto; margin-right: 36px; }
.showall {
  position: relative;
  margin: -4px 0 0 auto;
  width: 164px;
  height: 64px;
  border: 2px solid #dadce0;
  border-radius: 8px;
  background: #fff;
  color: #1a73e8;
  font-family: Inter, "Liberation Sans", sans-serif;
  font-size: 24.500px;
  font-weight: 500;
}
.dl-close { position: relative; width: 20px; height: 20px; margin: -4px 0 0 25px; color: #7a7d80; }

/* desktop + dock */
.desktop {
  flex: 1;
  display: flex;
  justify-content: center;
  background: linear-gradient(90deg, #03101d, #04121f 50%, #041525);
}
.dock {
  width: 1152px;
  height: 100px;
  display: flex;
  padding-left: 6px;
  background: #4a596b;
  border-radius: 14px 14px 0 0;
}
.dock-cell { position: relative; width: 82px; height: 100px; flex: none; display: flex; justify-content: center; padding-top: 12px; }
.dock-icon { width: 72px; height: 72px; overflow: visible; }
.dock-cell.running::after {
  content: "";
  position: absolute;
  left: 37px;
  top: 88px;
  width: 8px;
  height: 8px;
  border-radius: 50%;
  background: #05080c;
}
.dock-sep { width: 2px; height: 72px; margin: 14px 18px 0 18px; background: #14202e; flex: none; display: block; }
.d3 { font-family: "Liberation Sans", sans-serif; font-size: 11px; fill: #555; }
.cal-m { font-family: "Liberation Sans", sans-serif; font-size: 13px; fill: #fff; }
.cal-d { font-family: "Liberation Sans", sans-serif; font-size: 32px; fill: #222; }
.term { font-family: "Liberation Mono", monospace; font-size: 26px; font-weight: 700; fill: #1fd75f; }
.ppt { font-family: "Liberation Sans", sans-serif; font-size: 22px; font-weight: 700; fill: #fff; }
```
